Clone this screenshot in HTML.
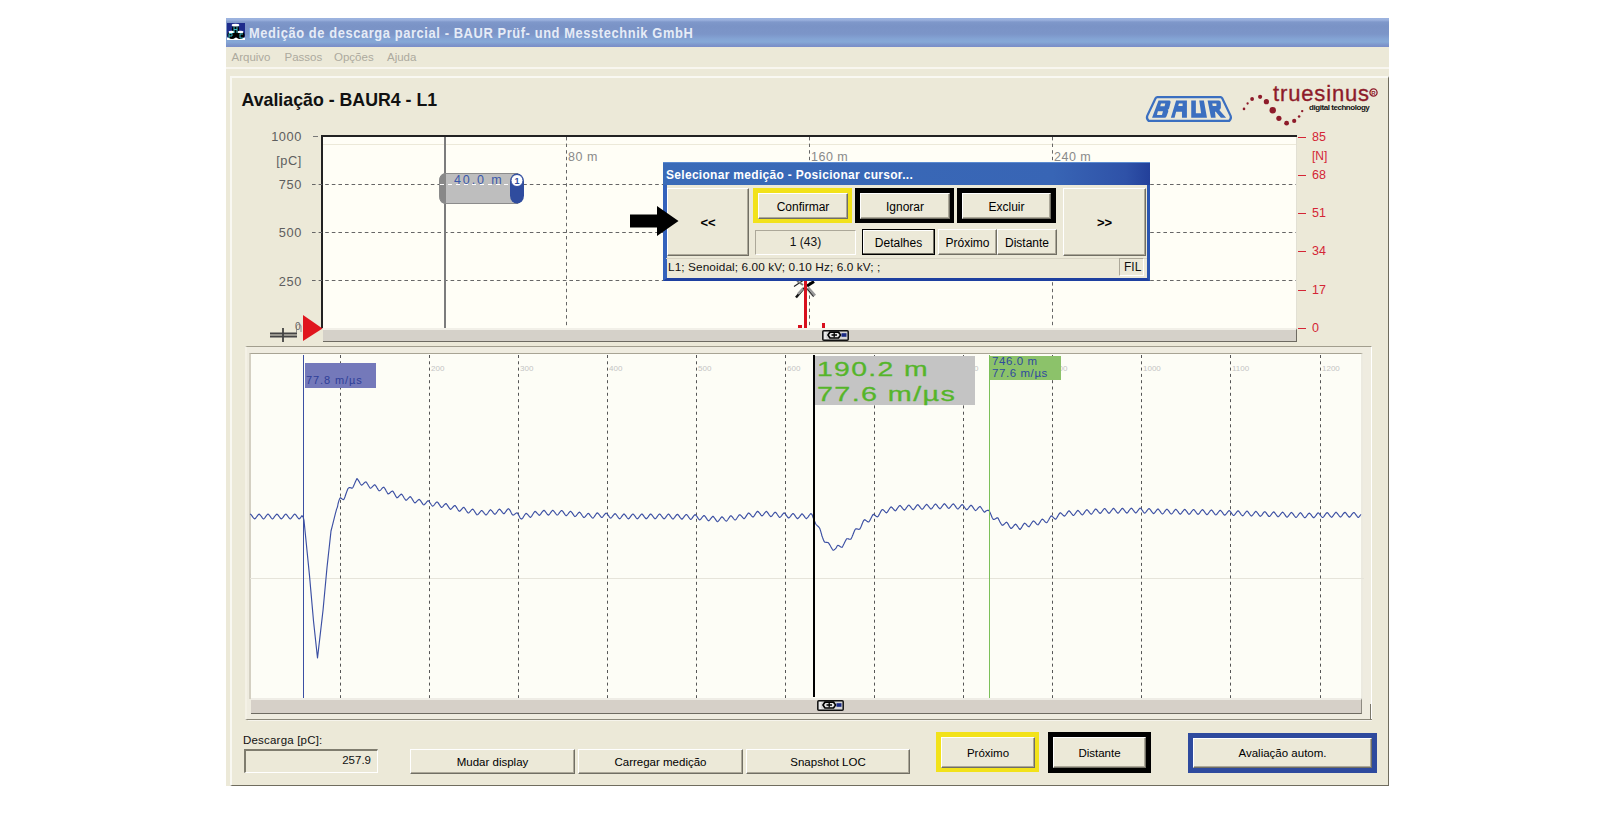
<!DOCTYPE html>
<html><head><meta charset="utf-8"><title>BAUR</title><style>
html,body{margin:0;padding:0;background:#fff;}
body{width:1620px;height:818px;position:relative;overflow:hidden;font-family:"Liberation Sans",sans-serif;}
.a{position:absolute;}
.t{position:absolute;white-space:nowrap;line-height:1;}
.btn{position:absolute;box-sizing:border-box;background:#ECE9D8;border-top:1px solid #FFFFFF;border-left:1px solid #FFFFFF;border-right:1px solid #716F64;border-bottom:1px solid #716F64;box-shadow:inset -1px -1px 0 #ACA899;font-size:12px;color:#000;text-align:center;}
.btn span{position:absolute;left:0;right:0;white-space:nowrap;}
.hd{position:absolute;height:0;border-top:1px dashed #555;}
</style></head><body>

<div class="a" style="left:226px;top:18px;width:1163px;height:768px;background:#ECE9D8;"></div>
<div class="a" style="left:226px;top:18px;width:1163px;height:29px;background:linear-gradient(#9CB3DF 0px,#9AB1DD 2px,#7F98CA 4px,#7A93C6 8px,#7C95C8 16px,#84A4D5 21px,#86A8D6 24px,#7D95CB 27px,#7A8CC8 29px);"></div>
<svg class="a" style="left:227px;top:23px" width="18" height="17" viewBox="0 0 18 17">
<rect x="0" y="0" width="18" height="17" fill="#1E2C8C"/>
<rect x="0" y="14.5" width="18" height="2.5" fill="#fff"/>
<ellipse cx="8.5" cy="6.5" rx="3.6" ry="4.5" fill="#000"/>
<ellipse cx="8.5" cy="2.2" rx="3.8" ry="1.4" fill="#fff"/>
<ellipse cx="5" cy="12" rx="4.6" ry="4" fill="#000"/>
<ellipse cx="13" cy="12" rx="4.6" ry="4" fill="#000"/>
<ellipse cx="4.5" cy="9" rx="3" ry="1.3" fill="#fff"/>
<ellipse cx="13.5" cy="9" rx="3" ry="1.3" fill="#fff"/>
<path d="M7,3.5 V10 M7,6.5 H10 M10,3.5 V10" stroke="#40C8D8" stroke-width="0.9" fill="none"/>
<path d="M2,15 V10.5 H5 V13 H2" stroke="#40C8D8" stroke-width="0.9" fill="none"/>
<path d="M16,11 H13 V15 H16" stroke="#40C8D8" stroke-width="0.9" fill="none"/>
</svg>
<div class="t" id="ttl" style="left:249px;top:25px;font-size:15px;font-weight:bold;color:#E6ECF7;letter-spacing:0.7px;transform-origin:0 0;transform:scaleX(0.858);">Medição de descarga parcial - BAUR Prüf- und Messtechnik GmbH</div>
<div class="t" style="left:231.5px;top:52px;font-size:11.5px;color:#ACAA9E;">Arquivo</div>
<div class="t" style="left:284.5px;top:52px;font-size:11.5px;color:#ACAA9E;">Passos</div>
<div class="t" style="left:334px;top:52px;font-size:11.5px;color:#ACAA9E;">Opções</div>
<div class="t" style="left:387px;top:52px;font-size:11.5px;color:#ACAA9E;">Ajuda</div>
<div class="a" style="left:226px;top:67px;width:1163px;height:2px;background:#F8F6EF;"></div>
<div class="a" style="left:230px;top:76px;width:1159px;height:710px;border-top:2px solid #F9F8F2;border-left:2px solid #F9F8F2;border-right:1px solid #6F6C5E;border-bottom:1px solid #6F6C5E;box-sizing:border-box;"></div>
<div class="t" style="left:241.5px;top:92.3px;font-size:17.75px;font-weight:bold;color:#111;">Avaliação - BAUR4 - L1</div>
<svg class="a" style="left:1140px;top:85px" width="100" height="45" viewBox="0 0 1620 729">
<path d="M282,197 L1305,197 Q1322,197 1332,215 L1468,500 Q1485,545 1445,582 L140,582 Q100,545 117,500 L252,215 Q262,197 282,197 Z" fill="none" stroke="#3B6FC0" stroke-width="36"/>
<path fill-rule="evenodd" fill="#3B6FC0" d="M300,250 L475,250 Q500,252 495,285 L472,375 Q468,392 448,400 Q462,410 458,430 L430,505 Q420,530 395,530 L195,530 Z M340,300 L410,300 L398,345 L328,345 Z M290,425 L372,425 L356,485 L274,485 Z"/>
<path fill-rule="evenodd" fill="#3B6FC0" d="M585,250 L760,250 L760,530 L680,530 L680,432 L585,432 L560,530 L500,530 Z M630,300 L690,300 L690,340 L620,340 Z"/>
<path fill="#3B6FC0" d="M830,250 L905,250 L905,458 L990,458 L960,250 L1035,250 L1085,530 L830,530 Z"/>
<path fill-rule="evenodd" fill="#3B6FC0" d="M1095,250 L1280,250 Q1310,255 1310,290 L1310,370 Q1305,395 1285,405 L1395,530 L1310,530 L1228,432 L1215,432 L1225,530 L1150,530 Z M1170,300 L1238,300 L1238,342 L1178,342 Z"/>
</svg>
<svg class="a" style="left:0px;top:0px;overflow:visible" width="1" height="1"><circle cx="1244.0" cy="108.9" r="1.3" fill="#8E1B2A"/><circle cx="1247.6" cy="103.5" r="1.15" fill="#8E1B2A"/><circle cx="1252.1" cy="99.0" r="1.9" fill="#8E1B2A"/><circle cx="1260.1" cy="96.8" r="2.1" fill="#8E1B2A"/><circle cx="1266.4" cy="101.7" r="2.6" fill="#8E1B2A"/><circle cx="1272.7" cy="110.2" r="3.2" fill="#8E1B2A"/><circle cx="1278.9" cy="118.3" r="2.6" fill="#8E1B2A"/><circle cx="1286.6" cy="123.2" r="2.4" fill="#8E1B2A"/><circle cx="1294.2" cy="120.9" r="2.1" fill="#8E1B2A"/><circle cx="1299.1" cy="116.5" r="1.3" fill="#8E1B2A"/><circle cx="1302.2" cy="111.1" r="1.2" fill="#8E1B2A"/></svg>
<div class="t" id="ts" style="left:1273px;top:82.5px;font-size:22px;color:#8E1B2A;letter-spacing:0.85px;-webkit-text-stroke:0.35px #8E1B2A;">truesinus</div>
<svg class="a" style="left:1369px;top:87.5px" width="9" height="9" viewBox="0 0 9 9"><circle cx="4.5" cy="4.5" r="3.6" fill="none" stroke="#8E1B2A" stroke-width="1.3"/><text x="4.5" y="7" text-anchor="middle" font-size="6" font-weight="bold" fill="#8E1B2A" font-family="Liberation Sans">R</text></svg>
<div class="t" style="left:1309px;top:104px;font-size:8px;color:#111;font-weight:bold;letter-spacing:-0.45px;">digital technology</div>
<div class="a" style="left:321px;top:135px;width:976px;height:193px;background:#FFFEF6;border-top:2px solid #222;border-left:2px solid #222;box-sizing:border-box;"></div>
<div class="a" style="left:323px;top:144px;width:973px;height:1px;background:#ECE9D9;"></div>
<div class="a" style="left:1296px;top:137px;width:1px;height:191px;background:#E2E0D4;"></div>
<div class="a" style="left:313px;top:136px;width:5px;height:1px;background:#777;"></div>
<svg class="a" style="left:0;top:0" width="1620" height="818"><line x1="312" y1="184.5" x2="1296" y2="184.5" stroke="#666" stroke-width="1" stroke-dasharray="3.6 3"/></svg>
<svg class="a" style="left:0;top:0" width="1620" height="818"><line x1="312" y1="232.5" x2="1296" y2="232.5" stroke="#666" stroke-width="1" stroke-dasharray="3.6 3"/></svg>
<svg class="a" style="left:0;top:0" width="1620" height="818"><line x1="312" y1="280.5" x2="1296" y2="280.5" stroke="#666" stroke-width="1" stroke-dasharray="3.6 3"/></svg>
<svg class="a" style="left:0;top:0" width="1620" height="818"><line x1="566.5" y1="137" x2="566.5" y2="328" stroke="#666" stroke-width="1" stroke-dasharray="3.4 3.2"/></svg>
<svg class="a" style="left:0;top:0" width="1620" height="818"><line x1="809.5" y1="137" x2="809.5" y2="328" stroke="#666" stroke-width="1" stroke-dasharray="3.4 3.2"/></svg>
<svg class="a" style="left:0;top:0" width="1620" height="818"><line x1="1052.5" y1="137" x2="1052.5" y2="328" stroke="#666" stroke-width="1" stroke-dasharray="3.4 3.2"/></svg>
<div class="t" style="left:568px;top:151px;font-size:12.5px;color:#8A8A8A;letter-spacing:0.5px;">80 m</div>
<div class="t" style="left:811px;top:151px;font-size:12.5px;color:#8A8A8A;letter-spacing:0.5px;">160 m</div>
<div class="t" style="left:1054px;top:151px;font-size:12.5px;color:#8A8A8A;letter-spacing:0.5px;">240 m</div>
<div class="t" style="left:240px;width:62px;text-align:right;top:131px;font-size:12.8px;color:#5E5E5E;letter-spacing:0.6px;">1000</div>
<div class="t" style="left:240px;width:62px;text-align:right;top:155px;font-size:12.8px;color:#5E5E5E;letter-spacing:0.6px;">[pC]</div>
<div class="t" style="left:240px;width:62px;text-align:right;top:179px;font-size:12.8px;color:#5E5E5E;letter-spacing:0.6px;">750</div>
<div class="t" style="left:240px;width:62px;text-align:right;top:227px;font-size:12.8px;color:#5E5E5E;letter-spacing:0.6px;">500</div>
<div class="t" style="left:240px;width:62px;text-align:right;top:276px;font-size:12.8px;color:#5E5E5E;letter-spacing:0.6px;">250</div>
<div class="t" style="left:295px;top:322px;font-size:10px;color:#666;">0</div>
<div class="a" style="left:1298px;top:136.5px;width:8px;height:1.2px;background:#D42535;"></div>
<div class="t" style="left:1312px;top:131px;font-size:12.5px;color:#D42535;">85</div>
<div class="a" style="left:1298px;top:174.5px;width:8px;height:1.2px;background:#D42535;"></div>
<div class="t" style="left:1312px;top:169px;font-size:12.5px;color:#D42535;">68</div>
<div class="a" style="left:1298px;top:212.5px;width:8px;height:1.2px;background:#D42535;"></div>
<div class="t" style="left:1312px;top:207px;font-size:12.5px;color:#D42535;">51</div>
<div class="a" style="left:1298px;top:250.5px;width:8px;height:1.2px;background:#D42535;"></div>
<div class="t" style="left:1312px;top:245px;font-size:12.5px;color:#D42535;">34</div>
<div class="a" style="left:1298px;top:289.5px;width:8px;height:1.2px;background:#D42535;"></div>
<div class="t" style="left:1312px;top:284px;font-size:12.5px;color:#D42535;">17</div>
<div class="a" style="left:1298px;top:327.5px;width:8px;height:1.2px;background:#D42535;"></div>
<div class="t" style="left:1312px;top:322px;font-size:12.5px;color:#D42535;">0</div>
<div class="t" style="left:1312px;top:150px;font-size:12px;color:#D42535;">[N]</div>
<div class="a" style="left:444px;top:137px;width:2px;height:191px;background:#7C7C7C;"></div>
<svg class="a" style="left:438px;top:172px" width="90" height="34" viewBox="0 0 90 34">
<path d="M8,1.5 L80,1.5 L80,31.5 L8,31.5 Q1.5,31.5 1.5,24 L1.5,9 Q1.5,1.5 8,1.5 Z" fill="#BEBEBE" stroke="#8C8C8C" stroke-width="1"/>
<path d="M8,1.5 L8,31.5 Q1.5,31.5 1.5,24 L1.5,9 Q1.5,1.5 8,1.5 Z" fill="#888"/>
<rect x="72" y="1.5" width="14" height="30" rx="7" ry="8" fill="#2F4C9E"/>
<circle cx="79" cy="8.5" r="6" fill="#fff" stroke="#2F4C9E" stroke-width="1"/>
<text x="79" y="12" text-anchor="middle" font-size="9" font-family="Liberation Sans" font-weight="bold" fill="#2F4C9E">1</text>
</svg>
<div class="a" style="left:440px;top:184px;width:70px;height:1px;background:repeating-linear-gradient(90deg,#fff 0 4px,transparent 4px 8px);"></div>
<div class="t" style="left:454px;top:174px;font-size:12.5px;color:#3A58AA;letter-spacing:1.9px;">40.0 m</div>
<div class="a" style="left:323px;top:328px;width:974px;height:14px;background:#D5D1C9;border-top:2px solid #F2F0E8;border-bottom:1.5px solid #6E6B62;border-right:1px solid #6E6B62;box-sizing:border-box;"></div>
<svg class="a" style="left:822px;top:330px" width="27" height="11" viewBox="0 0 27 11">
<rect x="0.8" y="0.8" width="25.4" height="9.4" rx="1" fill="#D6D6D6" stroke="#111" stroke-width="1.5"/>
<path d="M4.5,2.5 H3 V8.5 H4.5" stroke="#F4F4F4" stroke-width="1.2" fill="none"/>
<path d="M7.5,1.2 L17,1.2 L19.5,5 L17,8.8 L7.5,8.8 L5,5 Z" fill="#000"/>
<path d="M8.5,3 L16,3 L17.6,5 L16,7.2 L8.5,7.2 L7,5 Z" fill="#E6E6E6"/>
<path d="M12.2,2.6 V7.6 M9.5,5 H15" stroke="#000" stroke-width="1.3"/>
<rect x="19.5" y="3.2" width="5" height="3.6" fill="#1A2A84"/>
</svg>
<svg class="a" style="left:300px;top:312px" width="26" height="32" viewBox="0 0 26 32"><path d="M3,3 L22.5,16.5 L3,29 Z" fill="#E0161E"/></svg>
<svg class="a" style="left:266px;top:320px" width="40" height="26" viewBox="0 0 40 26">
<path d="M4,13.5 H31 M4,16.5 H31 M17,8 V22" stroke="#444" stroke-width="1.8" fill="none"/>
<path d="M30.5,13 V5.5 Q33,2.5 35,5.5 V12" stroke="#777" stroke-width="0.8" fill="none"/>
</svg>
<div class="a" style="left:804px;top:281px;width:3px;height:47px;background:#D8101E;"></div>
<div class="a" style="left:798px;top:325px;width:4px;height:3px;background:#D8101E;"></div>
<div class="a" style="left:822px;top:323px;width:3px;height:5px;background:#D8101E;"></div>
<svg class="a" style="left:788px;top:276px" width="36" height="28" viewBox="0 0 36 28">
<path d="M6,10.5 L15,4.5" stroke="#222" stroke-width="1.2"/>
<path d="M9,5 L15,9" stroke="#777" stroke-width="2"/>
<path d="M8,21.5 L16,12" stroke="#111" stroke-width="2.4"/>
<path d="M10,18 L15,12.5" stroke="#999" stroke-width="2.5"/>
<path d="M19,10 L26,5.5" stroke="#000" stroke-width="3"/>
<path d="M19.5,12 L26.5,20" stroke="#999" stroke-width="4"/>
<path d="M19,12.5 L25.5,20.5" stroke="#222" stroke-width="1"/>
</svg>
<div class="a" style="left:804px;top:281px;width:3px;height:20px;background:#D8101E;"></div>
<div class="a" style="left:663px;top:162px;width:487px;height:119px;background:#ECE9D8;box-sizing:border-box;border-left:4px solid #3462BC;border-right:3px solid #2A55B0;border-bottom:3px solid #1E40A0;"></div>
<div class="a" style="left:663px;top:162px;width:487px;height:23px;background:linear-gradient(90deg,#3A6BB8 0%,#3865B5 80%,#2F52A8 95%,#23409A 100%);border-top:1px solid #5A8AD0;box-sizing:border-box;"></div>
<div class="t" style="left:666px;top:169px;font-size:12px;font-weight:bold;color:#fff;letter-spacing:0.3px;">Selecionar medição - Posicionar cursor...</div>
<div class="btn" style="left:667px;top:188px;width:82px;height:68px;"><span style="top:26px;font-size:13px;font-weight:bold;">&lt;&lt;</span></div>
<div class="btn" style="left:1063px;top:188px;width:83px;height:68px;"><span style="top:26px;font-size:13px;font-weight:bold;">&gt;&gt;</span></div>
<div class="a" style="left:753px;top:188px;width:99px;height:35px;background:#F2E21A;"></div>
<div class="btn" style="left:758px;top:193px;width:90px;height:26px;"><span style="top:6px;font-size:12px;">Confirmar</span></div>
<div class="a" style="left:855px;top:188px;width:99px;height:35px;background:#000;"></div>
<div class="btn" style="left:860px;top:193px;width:90px;height:26px;"><span style="top:6px;font-size:12px;">Ignorar</span></div>
<div class="a" style="left:957px;top:188px;width:99px;height:35px;background:#000;"></div>
<div class="btn" style="left:962px;top:193px;width:89px;height:26px;"><span style="top:6px;font-size:12px;">Excluir</span></div>
<div class="a" style="left:755px;top:230px;width:101px;height:25px;box-sizing:border-box;border-top:1px solid #ACA899;border-left:1px solid #ACA899;border-right:1px solid #fff;border-bottom:1px solid #fff;"></div>
<div class="t" style="left:755px;width:101px;text-align:center;top:236px;font-size:12px;color:#111;">1 (43)</div>
<div class="btn" style="left:862px;top:229px;width:73px;height:26px;border:1px solid #000;box-shadow:inset -1px -1px 0 #716F64, inset 1px 1px 0 #fff;"><span style="top:6px;font-size:12px;">Detalhes</span></div>
<div class="btn" style="left:938px;top:229px;width:59px;height:26px;"><span style="top:6px;font-size:12px;">Próximo</span></div>
<div class="btn" style="left:997px;top:229px;width:60px;height:26px;"><span style="top:6px;font-size:12px;">Distante</span></div>
<div class="a" style="left:666px;top:258px;width:481px;height:1px;background:#D8D4C4;"></div>
<div class="t" style="left:668px;top:262px;font-size:11.8px;color:#111;letter-spacing:0.1px;">L1; Senoidal; 6.00 kV; 0.10 Hz; 6.0 kV; ;</div>
<div class="a" style="left:1119px;top:258px;width:25px;height:18px;box-sizing:border-box;border-top:1px solid #ACA899;border-left:1px solid #ACA899;border-right:1px solid #fff;border-bottom:1px solid #fff;"></div>
<div class="t" style="left:1124px;top:261px;font-size:12px;color:#111;">FIL</div>
<svg class="a" style="left:628px;top:204px" width="52" height="34" viewBox="0 0 52 34"><path d="M2,10.5 H29 V2 L50.5,17 L29,32 V23.5 H2 Z" fill="#000"/></svg>
<div class="a" style="left:247px;top:346px;width:125px;height:374px;"></div>
<div class="a" style="left:245px;top:346px;width:1127px;height:374px;box-sizing:border-box;border-top:1px solid #A29E8E;border-left:2px solid #F4F1E6;border-right:1px solid #fff;border-bottom:1px solid #8A877A;background:#EFECE0;"></div>
<div class="a" style="left:249px;top:353px;width:1114px;height:346px;background:#FDFDF6;border-top:1px solid #A8A494;border-left:2px solid #D4D0C2;border-right:2px solid #ECEAE0;box-sizing:border-box;"></div>
<div class="a" style="left:250px;top:578px;width:1114px;height:1px;background:#E6E4DA;"></div>
<svg class="a" style="left:0;top:0" width="1620" height="818"><line x1="340.5" y1="355" x2="340.5" y2="698" stroke="#555" stroke-width="1" stroke-dasharray="3 3.3"/></svg>
<svg class="a" style="left:0;top:0" width="1620" height="818"><line x1="429.5" y1="355" x2="429.5" y2="698" stroke="#555" stroke-width="1" stroke-dasharray="3 3.3"/></svg>
<div class="t" style="left:431px;top:365px;font-size:8px;color:#C4C4C4;">200</div>
<svg class="a" style="left:0;top:0" width="1620" height="818"><line x1="518.5" y1="355" x2="518.5" y2="698" stroke="#555" stroke-width="1" stroke-dasharray="3 3.3"/></svg>
<div class="t" style="left:520px;top:365px;font-size:8px;color:#C4C4C4;">300</div>
<svg class="a" style="left:0;top:0" width="1620" height="818"><line x1="607.5" y1="355" x2="607.5" y2="698" stroke="#555" stroke-width="1" stroke-dasharray="3 3.3"/></svg>
<div class="t" style="left:609px;top:365px;font-size:8px;color:#C4C4C4;">400</div>
<svg class="a" style="left:0;top:0" width="1620" height="818"><line x1="696.5" y1="355" x2="696.5" y2="698" stroke="#555" stroke-width="1" stroke-dasharray="3 3.3"/></svg>
<div class="t" style="left:698px;top:365px;font-size:8px;color:#C4C4C4;">500</div>
<svg class="a" style="left:0;top:0" width="1620" height="818"><line x1="785.5" y1="355" x2="785.5" y2="698" stroke="#555" stroke-width="1" stroke-dasharray="3 3.3"/></svg>
<div class="t" style="left:787px;top:365px;font-size:8px;color:#C4C4C4;">600</div>
<svg class="a" style="left:0;top:0" width="1620" height="818"><line x1="874.5" y1="355" x2="874.5" y2="698" stroke="#555" stroke-width="1" stroke-dasharray="3 3.3"/></svg>
<div class="t" style="left:876px;top:365px;font-size:8px;color:#C4C4C4;">700</div>
<svg class="a" style="left:0;top:0" width="1620" height="818"><line x1="963.5" y1="355" x2="963.5" y2="698" stroke="#555" stroke-width="1" stroke-dasharray="3 3.3"/></svg>
<div class="t" style="left:965px;top:365px;font-size:8px;color:#C4C4C4;">800</div>
<svg class="a" style="left:0;top:0" width="1620" height="818"><line x1="1052.5" y1="355" x2="1052.5" y2="698" stroke="#555" stroke-width="1" stroke-dasharray="3 3.3"/></svg>
<div class="t" style="left:1054px;top:365px;font-size:8px;color:#C4C4C4;">900</div>
<svg class="a" style="left:0;top:0" width="1620" height="818"><line x1="1141.5" y1="355" x2="1141.5" y2="698" stroke="#555" stroke-width="1" stroke-dasharray="3 3.3"/></svg>
<div class="t" style="left:1143px;top:365px;font-size:8px;color:#C4C4C4;">1000</div>
<svg class="a" style="left:0;top:0" width="1620" height="818"><line x1="1230.5" y1="355" x2="1230.5" y2="698" stroke="#555" stroke-width="1" stroke-dasharray="3 3.3"/></svg>
<div class="t" style="left:1232px;top:365px;font-size:8px;color:#C4C4C4;">1100</div>
<svg class="a" style="left:0;top:0" width="1620" height="818"><line x1="1320.5" y1="355" x2="1320.5" y2="698" stroke="#555" stroke-width="1" stroke-dasharray="3 3.3"/></svg>
<div class="t" style="left:1322px;top:365px;font-size:8px;color:#C4C4C4;">1200</div>
<div class="a" style="left:251px;top:698px;width:1111px;height:16px;background:#D6D0C8;border-top:2px solid #EFEDE6;border-bottom:1px solid #6E6B62;border-right:1px solid #8E8B82;box-sizing:border-box;"></div>
<div class="a" style="left:248px;top:719px;width:1124px;height:1px;background:#8A877A;"></div>
<div class="a" style="left:1370px;top:704px;width:1px;height:16px;background:#7A776A;"></div>
<svg class="a" style="left:817px;top:700px" width="27" height="11" viewBox="0 0 27 11">
<rect x="0.8" y="0.8" width="25.4" height="9.4" rx="1" fill="#D6D6D6" stroke="#111" stroke-width="1.5"/>
<path d="M4.5,2.5 H3 V8.5 H4.5" stroke="#F4F4F4" stroke-width="1.2" fill="none"/>
<path d="M7.5,1.2 L17,1.2 L19.5,5 L17,8.8 L7.5,8.8 L5,5 Z" fill="#000"/>
<path d="M8.5,3 L16,3 L17.6,5 L16,7.2 L8.5,7.2 L7,5 Z" fill="#E6E6E6"/>
<path d="M12.2,2.6 V7.6 M9.5,5 H15" stroke="#000" stroke-width="1.3"/>
<rect x="19.5" y="3.2" width="5" height="3.6" fill="#1A2A84"/>
</svg>
<svg class="a" style="left:0;top:0" width="1620" height="818" viewBox="0 0 1620 818"><path d="M250.0,514.1 L250.5,514.2 L251.0,514.7 L251.5,515.2 L252.0,515.9 L252.5,516.6 L253.0,517.3 L253.5,517.9 L254.0,518.5 L254.5,518.9 L255.0,518.7 L255.5,518.3 L256.0,517.7 L256.5,517.0 L257.0,516.3 L257.5,515.6 L258.0,515.0 L258.5,514.5 L259.0,514.1 L259.5,514.3 L260.0,514.8 L260.5,515.4 L261.0,516.0 L261.5,516.7 L262.0,517.4 L262.5,518.1 L263.0,518.6 L263.5,519.0 L264.0,518.7 L264.5,518.2 L265.0,517.6 L265.5,516.9 L266.0,516.2 L266.5,515.5 L267.0,514.9 L267.5,514.4 L268.0,514.0 L268.5,514.4 L269.0,514.9 L269.5,515.5 L270.0,516.2 L270.5,516.9 L271.0,517.6 L271.5,518.2 L272.0,518.7 L272.5,519.0 L273.0,518.6 L273.5,518.1 L274.0,517.4 L274.5,516.7 L275.0,516.0 L275.5,515.4 L276.0,514.8 L276.5,514.3 L277.0,514.1 L277.5,514.5 L278.0,515.0 L278.5,515.6 L279.0,516.3 L279.5,517.0 L280.0,517.7 L280.5,518.3 L281.0,518.7 L281.5,518.9 L282.0,518.5 L282.5,517.9 L283.0,517.3 L283.5,516.6 L284.0,515.9 L284.5,515.2 L285.0,514.7 L285.5,514.2 L286.0,514.1 L286.5,514.6 L287.0,515.1 L287.5,515.8 L288.0,516.5 L288.5,517.2 L289.0,517.8 L289.5,518.4 L290.0,518.8 L290.5,518.8 L291.0,518.4 L291.5,517.8 L292.0,517.2 L292.5,516.5 L293.0,515.8 L293.5,515.1 L294.0,514.6 L294.5,514.1 L295.0,514.2 L295.5,514.7 L296.0,515.2 L296.5,515.9 L297.0,516.6 L297.5,517.3 L298.0,517.9 L298.5,518.5 L299.0,518.9 L299.5,518.7 L300.0,518.3 L300.5,517.7 L301.0,517.0 L301.5,516.3 L302.0,515.6 L302.5,516.5 L303.0,516.5 L303.5,518.5 L304.0,520.5 L304.5,525.5 L305.0,530.5 L305.5,535.5 L306.0,540.5 L306.5,545.5 L307.0,550.6 L307.5,555.6 L308.0,560.6 L308.5,565.6 L309.0,570.6 L309.5,575.6 L310.0,581.3 L310.5,587.0 L311.0,592.6 L311.5,598.3 L312.0,604.0 L312.5,609.6 L313.0,615.3 L313.5,621.0 L314.0,625.6 L314.5,630.2 L315.0,634.9 L315.5,639.5 L316.0,644.1 L316.5,648.8 L317.0,653.4 L317.5,658.0 L318.0,653.7 L318.5,649.4 L319.0,645.0 L319.5,640.7 L320.0,636.4 L320.5,632.1 L321.0,627.8 L321.5,623.5 L322.0,619.1 L322.5,614.8 L323.0,610.5 L323.5,605.1 L324.0,599.8 L324.5,594.4 L325.0,589.0 L325.5,583.6 L326.0,578.2 L326.5,572.9 L327.0,567.5 L327.5,562.9 L328.0,558.4 L328.5,553.8 L329.0,549.2 L329.5,544.7 L330.0,540.1 L330.5,535.6 L331.0,531.0 L331.5,529.0 L332.0,527.1 L332.5,525.1 L333.0,523.1 L333.5,521.1 L334.0,519.2 L334.5,517.2 L335.0,515.2 L335.5,513.2 L336.0,511.3 L336.5,509.4 L337.0,508.1 L337.5,506.8 L338.0,504.0 L338.5,502.1 L339.0,500.4 L339.5,499.1 L340.0,498.2 L340.5,497.7 L341.0,498.1 L341.5,498.5 L342.0,498.9 L342.5,499.3 L343.0,499.5 L343.5,499.7 L344.0,499.2 L344.5,498.0 L345.0,496.7 L345.5,495.3 L346.0,493.8 L346.5,492.4 L347.0,491.0 L347.5,489.7 L348.0,488.6 L348.5,488.0 L349.0,487.8 L349.5,487.6 L350.0,487.5 L350.5,487.7 L351.0,487.9 L351.5,488.1 L352.0,488.1 L352.5,488.0 L353.0,487.2 L353.5,486.2 L354.0,485.1 L354.5,483.9 L355.0,482.7 L355.5,481.5 L356.0,480.4 L356.5,479.4 L357.0,478.5 L357.5,479.1 L358.0,479.8 L358.5,480.6 L359.0,481.4 L359.5,482.3 L360.0,483.2 L360.5,484.0 L361.0,484.7 L361.5,485.2 L362.0,485.0 L362.5,484.6 L363.0,484.2 L363.5,483.7 L364.0,483.2 L364.5,482.7 L365.0,482.3 L365.5,482.0 L366.0,481.9 L366.5,482.5 L367.0,483.2 L367.5,484.0 L368.0,484.8 L368.5,485.7 L369.0,486.5 L369.5,487.3 L370.0,487.9 L370.5,488.2 L371.0,488.0 L371.5,487.6 L372.0,487.1 L372.5,486.6 L373.0,486.1 L373.5,485.6 L374.0,485.2 L374.5,484.8 L375.0,484.9 L375.5,485.5 L376.0,486.2 L376.5,486.9 L377.0,487.8 L377.5,488.6 L378.0,489.4 L378.5,490.1 L379.0,490.7 L379.5,490.8 L380.0,490.5 L380.5,490.1 L381.0,489.6 L381.5,489.0 L382.0,488.4 L382.5,487.9 L383.0,487.5 L383.5,487.2 L384.0,487.4 L384.5,488.0 L385.0,488.7 L385.5,489.6 L386.0,490.6 L386.5,491.5 L387.0,492.3 L387.5,493.1 L388.0,493.8 L388.5,493.8 L389.0,493.6 L389.5,493.2 L390.0,492.8 L390.5,492.3 L391.0,491.9 L391.5,491.5 L392.0,491.2 L392.5,491.0 L393.0,491.4 L393.5,492.1 L394.0,493.0 L394.5,493.9 L395.0,494.8 L395.5,495.7 L396.0,496.6 L396.5,497.2 L397.0,497.8 L397.5,497.6 L398.0,497.2 L398.5,496.8 L399.0,496.2 L399.5,495.7 L400.0,495.1 L400.5,494.7 L401.0,494.3 L401.5,494.1 L402.0,494.6 L402.5,495.2 L403.0,496.0 L403.5,496.8 L404.0,497.7 L404.5,498.5 L405.0,499.2 L405.5,499.9 L406.0,500.3 L406.5,500.1 L407.0,499.7 L407.5,499.2 L408.0,498.7 L408.5,498.1 L409.0,497.6 L409.5,497.1 L410.0,496.8 L410.5,496.7 L411.0,497.3 L411.5,498.0 L412.0,498.7 L412.5,499.6 L413.0,500.4 L413.5,501.2 L414.0,502.0 L414.5,502.6 L415.0,502.9 L415.5,502.6 L416.0,502.2 L416.5,501.7 L417.0,501.2 L417.5,500.7 L418.0,500.1 L418.5,499.7 L419.0,499.4 L419.5,499.5 L420.0,500.1 L420.5,500.7 L421.0,501.4 L421.5,502.2 L422.0,502.9 L422.5,503.7 L423.0,504.3 L423.5,504.8 L424.0,504.9 L424.5,504.5 L425.0,504.0 L425.5,503.4 L426.0,502.8 L426.5,502.1 L427.0,501.6 L427.5,501.1 L428.0,500.7 L428.5,500.9 L429.0,501.4 L429.5,502.0 L430.0,502.8 L430.5,503.5 L431.0,504.3 L431.5,505.0 L432.0,505.6 L432.5,506.1 L433.0,506.0 L433.5,505.6 L434.0,505.1 L434.5,504.5 L435.0,503.8 L435.5,503.2 L436.0,502.7 L436.5,502.2 L437.0,501.9 L437.5,502.2 L438.0,502.7 L438.5,503.4 L439.0,504.1 L439.5,504.9 L440.0,505.6 L440.5,506.4 L441.0,507.0 L441.5,507.5 L442.0,507.3 L442.5,506.9 L443.0,506.4 L443.5,505.8 L444.0,505.2 L444.5,504.7 L445.0,504.2 L445.5,503.8 L446.0,503.5 L446.5,504.0 L447.0,504.6 L447.5,505.3 L448.0,506.1 L448.5,506.9 L449.0,507.7 L449.5,508.4 L450.0,509.0 L450.5,509.4 L451.0,509.1 L451.5,508.7 L452.0,508.2 L452.5,507.6 L453.0,507.0 L453.5,506.5 L454.0,506.0 L454.5,505.6 L455.0,505.5 L455.5,506.0 L456.0,506.6 L456.5,507.4 L457.0,508.2 L457.5,509.0 L458.0,509.8 L458.5,510.5 L459.0,511.0 L459.5,511.3 L460.0,511.0 L460.5,510.5 L461.0,510.0 L461.5,509.4 L462.0,508.8 L462.5,508.2 L463.0,507.8 L463.5,507.4 L464.0,507.4 L464.5,508.0 L465.0,508.6 L465.5,509.4 L466.0,510.2 L466.5,511.0 L467.0,511.7 L467.5,512.4 L468.0,512.9 L468.5,513.0 L469.0,512.7 L469.5,512.2 L470.0,511.7 L470.5,511.1 L471.0,510.5 L471.5,509.9 L472.0,509.5 L472.5,509.1 L473.0,509.3 L473.5,509.9 L474.0,510.5 L474.5,511.3 L475.0,512.1 L475.5,512.9 L476.0,513.6 L476.5,514.3 L477.0,514.8 L477.5,514.7 L478.0,514.4 L478.5,513.9 L479.0,513.3 L479.5,512.7 L480.0,512.1 L480.5,511.5 L481.0,510.9 L481.5,510.5 L482.0,510.6 L482.5,511.1 L483.0,511.6 L483.5,512.3 L484.0,512.9 L484.5,513.6 L485.0,514.2 L485.5,514.7 L486.0,515.0 L486.5,514.7 L487.0,514.1 L487.5,513.5 L488.0,512.8 L488.5,512.0 L489.0,511.3 L489.5,510.7 L490.0,510.1 L490.5,509.7 L491.0,510.1 L491.5,510.5 L492.0,511.1 L492.5,511.7 L493.0,512.4 L493.5,513.1 L494.0,513.6 L494.5,514.1 L495.0,514.3 L495.5,513.9 L496.0,513.4 L496.5,512.7 L497.0,512.0 L497.5,511.2 L498.0,510.5 L498.5,509.9 L499.0,509.4 L499.5,509.1 L500.0,509.5 L500.5,510.0 L501.0,510.6 L501.5,511.2 L502.0,511.9 L502.5,512.6 L503.0,513.1 L503.5,513.6 L504.0,513.7 L504.5,513.3 L505.0,512.7 L505.5,512.0 L506.0,511.3 L506.5,510.6 L507.0,509.9 L507.5,509.3 L508.0,508.8 L508.5,508.7 L509.0,509.1 L509.5,509.6 L510.0,510.3 L510.5,511.3 L511.0,512.3 L511.5,513.2 L512.0,514.1 L512.5,514.8 L513.0,515.1 L513.5,515.0 L514.0,514.7 L514.5,514.4 L515.0,514.0 L515.5,513.6 L516.0,513.2 L516.5,513.0 L517.0,512.8 L517.5,513.2 L518.0,514.0 L518.5,514.8 L519.0,515.8 L519.5,516.8 L520.0,517.8 L520.5,518.3 L521.0,518.8 L521.5,519.1 L522.0,518.8 L522.5,518.3 L523.0,517.6 L523.5,516.8 L524.0,516.0 L524.5,515.2 L525.0,514.5 L525.5,513.9 L526.0,513.4 L526.5,513.5 L527.0,513.9 L527.5,514.4 L528.0,514.9 L528.5,515.5 L529.0,516.1 L529.5,516.7 L530.0,517.1 L530.5,517.4 L531.0,516.9 L531.5,516.3 L532.0,515.6 L532.5,514.8 L533.0,514.0 L533.5,513.2 L534.0,512.5 L534.5,511.8 L535.0,511.4 L535.5,511.6 L536.0,512.0 L536.5,512.5 L537.0,513.1 L537.5,513.7 L538.0,514.2 L538.5,514.7 L539.0,515.1 L539.5,515.3 L540.0,514.8 L540.5,514.3 L541.0,513.6 L541.5,512.9 L542.0,512.2 L542.5,511.6 L543.0,511.0 L543.5,510.5 L544.0,510.3 L544.5,510.7 L545.0,511.2 L545.5,511.8 L546.0,512.5 L546.5,513.2 L547.0,513.9 L547.5,514.5 L548.0,514.9 L548.5,515.1 L549.0,514.7 L549.5,514.1 L550.0,513.5 L550.5,512.8 L551.0,512.1 L551.5,511.4 L552.0,510.9 L552.5,510.4 L553.0,510.3 L553.5,510.8 L554.0,511.3 L554.5,512.0 L555.0,512.7 L555.5,513.4 L556.0,514.0 L556.5,514.6 L557.0,515.0 L557.5,515.0 L558.0,514.6 L558.5,514.0 L559.0,513.4 L559.5,512.7 L560.0,512.0 L560.5,511.4 L561.0,510.9 L561.5,510.5 L562.0,510.6 L562.5,511.1 L563.0,511.7 L563.5,512.4 L564.0,513.2 L564.5,513.9 L565.0,514.6 L565.5,515.2 L566.0,515.7 L566.5,515.6 L567.0,515.1 L567.5,514.6 L568.0,514.0 L568.5,513.3 L569.0,512.7 L569.5,512.1 L570.0,511.6 L570.5,511.3 L571.0,511.5 L571.5,512.1 L572.0,512.7 L572.5,513.4 L573.0,514.2 L573.5,514.9 L574.0,515.6 L574.5,516.2 L575.0,516.6 L575.5,516.3 L576.0,515.9 L576.5,515.3 L577.0,514.7 L577.5,514.0 L578.0,513.4 L578.5,512.8 L579.0,512.4 L579.5,512.1 L580.0,512.5 L580.5,513.1 L581.0,513.7 L581.5,514.5 L582.0,515.3 L582.5,516.0 L583.0,516.7 L583.5,517.3 L584.0,517.6 L584.5,517.3 L585.0,516.9 L585.5,516.3 L586.0,515.7 L586.5,515.1 L587.0,514.5 L587.5,513.9 L588.0,513.5 L588.5,513.4 L589.0,513.8 L589.5,514.4 L590.0,515.1 L590.5,515.8 L591.0,516.4 L591.5,517.0 L592.0,517.6 L592.5,518.0 L593.0,518.1 L593.5,517.6 L594.0,517.0 L594.5,516.3 L595.0,515.6 L595.5,514.9 L596.0,514.1 L596.5,513.5 L597.0,513.0 L597.5,512.9 L598.0,513.3 L598.5,513.8 L599.0,514.4 L599.5,515.0 L600.0,515.7 L600.5,516.4 L601.0,517.0 L601.5,517.4 L602.0,517.5 L602.5,517.1 L603.0,516.5 L603.5,515.9 L604.0,515.2 L604.5,514.6 L605.0,514.0 L605.5,513.5 L606.0,513.1 L606.5,513.2 L607.0,513.7 L607.5,514.3 L608.0,515.0 L608.5,515.7 L609.0,516.4 L609.5,517.1 L610.0,517.7 L610.5,518.1 L611.0,518.0 L611.5,517.6 L612.0,517.0 L612.5,516.4 L613.0,515.7 L613.5,515.1 L614.0,514.5 L614.5,514.0 L615.0,513.6 L615.5,513.9 L616.0,514.4 L616.5,515.0 L617.0,515.7 L617.5,516.5 L618.0,517.2 L618.5,517.9 L619.0,518.4 L619.5,518.8 L620.0,518.6 L620.5,518.1 L621.0,517.5 L621.5,516.8 L622.0,516.1 L622.5,515.4 L623.0,514.8 L623.5,514.3 L624.0,513.9 L624.5,514.3 L625.0,514.8 L625.5,515.4 L626.0,516.1 L626.5,516.8 L627.0,517.5 L627.5,518.1 L628.0,518.6 L628.5,518.9 L629.0,518.5 L629.5,518.0 L630.0,517.3 L630.5,516.6 L631.0,515.9 L631.5,515.3 L632.0,514.7 L632.5,514.2 L633.0,514.0 L633.5,514.4 L634.0,514.9 L634.5,515.5 L635.0,516.2 L635.5,516.9 L636.0,517.6 L636.5,518.2 L637.0,518.6 L637.5,518.8 L638.0,518.4 L638.5,517.8 L639.0,517.2 L639.5,516.5 L640.0,515.8 L640.5,515.1 L641.0,514.6 L641.5,514.1 L642.0,514.0 L642.5,514.5 L643.0,515.0 L643.5,515.7 L644.0,516.4 L644.5,517.1 L645.0,517.7 L645.5,518.3 L646.0,518.7 L646.5,518.7 L647.0,518.3 L647.5,517.7 L648.0,517.1 L648.5,516.4 L649.0,515.7 L649.5,515.0 L650.0,514.5 L650.5,514.0 L651.0,514.1 L651.5,514.6 L652.0,515.1 L652.5,515.8 L653.0,516.5 L653.5,517.2 L654.0,517.8 L654.5,518.4 L655.0,518.8 L655.5,518.6 L656.0,518.2 L656.5,517.6 L657.0,516.9 L657.5,516.2 L658.0,515.5 L658.5,514.9 L659.0,514.4 L659.5,514.0 L660.0,514.2 L660.5,514.7 L661.0,515.3 L661.5,516.0 L662.0,516.7 L662.5,517.4 L663.0,518.0 L663.5,518.5 L664.0,518.9 L664.5,518.6 L665.0,518.2 L665.5,517.6 L666.0,516.9 L666.5,516.2 L667.0,515.5 L667.5,514.9 L668.0,514.4 L668.5,514.0 L669.0,514.4 L669.5,514.9 L670.0,515.6 L670.5,516.3 L671.0,517.0 L671.5,517.7 L672.0,518.3 L672.5,518.8 L673.0,519.1 L673.5,518.7 L674.0,518.2 L674.5,517.6 L675.0,516.9 L675.5,516.2 L676.0,515.5 L676.5,515.0 L677.0,514.5 L677.5,514.3 L678.0,514.7 L678.5,515.2 L679.0,515.9 L679.5,516.6 L680.0,517.3 L680.5,517.9 L681.0,518.5 L681.5,519.0 L682.0,519.2 L682.5,518.8 L683.0,518.2 L683.5,517.6 L684.0,516.9 L684.5,516.2 L685.0,515.6 L685.5,515.0 L686.0,514.6 L686.5,514.5 L687.0,514.9 L687.5,515.5 L688.0,516.1 L688.5,516.9 L689.0,517.6 L689.5,518.2 L690.0,518.8 L690.5,519.3 L691.0,519.3 L691.5,518.8 L692.0,518.3 L692.5,517.6 L693.0,516.9 L693.5,516.2 L694.0,515.6 L694.5,515.1 L695.0,514.6 L695.5,514.8 L696.0,515.3 L696.5,515.9 L697.0,516.6 L697.5,517.4 L698.0,518.1 L698.5,518.8 L699.0,519.4 L699.5,519.9 L700.0,519.7 L700.5,519.3 L701.0,518.8 L701.5,518.2 L702.0,517.5 L702.5,516.9 L703.0,516.3 L703.5,515.8 L704.0,515.5 L704.5,515.7 L705.0,516.3 L705.5,516.9 L706.0,517.6 L706.5,518.4 L707.0,519.1 L707.5,519.8 L708.0,520.4 L708.5,520.8 L709.0,520.6 L709.5,520.1 L710.0,519.6 L710.5,518.9 L711.0,518.3 L711.5,517.7 L712.0,517.1 L712.5,516.6 L713.0,516.3 L713.5,516.7 L714.0,517.3 L714.5,518.0 L715.0,518.7 L715.5,519.4 L716.0,520.2 L716.5,520.8 L717.0,521.4 L717.5,521.7 L718.0,521.4 L718.5,520.9 L719.0,520.3 L719.5,519.7 L720.0,519.0 L720.5,518.3 L721.0,517.7 L721.5,517.1 L722.0,516.8 L722.5,517.2 L723.0,517.6 L723.5,518.2 L724.0,518.8 L724.5,519.5 L725.0,520.1 L725.5,520.6 L726.0,521.0 L726.5,521.1 L727.0,520.6 L727.5,520.0 L728.0,519.3 L728.5,518.5 L729.0,517.8 L729.5,517.1 L730.0,516.4 L730.5,515.9 L731.0,515.8 L731.5,516.1 L732.0,516.6 L732.5,517.2 L733.0,517.8 L733.5,518.5 L734.0,519.1 L734.5,519.6 L735.0,520.0 L735.5,519.9 L736.0,519.4 L736.5,518.8 L737.0,518.0 L737.5,517.3 L738.0,516.5 L738.5,515.8 L739.0,515.2 L739.5,514.7 L740.0,514.7 L740.5,515.1 L741.0,515.6 L741.5,516.1 L742.0,516.7 L742.5,517.3 L743.0,517.9 L743.5,518.3 L744.0,518.7 L744.5,518.4 L745.0,517.9 L745.5,517.2 L746.0,516.4 L746.5,515.6 L747.0,514.8 L747.5,514.1 L748.0,513.5 L748.5,513.0 L749.0,513.1 L749.5,513.5 L750.0,514.0 L750.5,514.6 L751.0,515.2 L751.5,515.8 L752.0,516.3 L752.5,516.8 L753.0,517.1 L753.5,516.7 L754.0,516.1 L754.5,515.4 L755.0,514.6 L755.5,513.8 L756.0,513.0 L756.5,512.3 L757.0,511.7 L757.5,511.3 L758.0,511.5 L758.5,512.0 L759.0,512.5 L759.5,513.1 L760.0,513.7 L760.5,514.4 L761.0,515.1 L761.5,515.6 L762.0,515.9 L762.5,515.6 L763.0,515.1 L763.5,514.5 L764.0,513.9 L764.5,513.2 L765.0,512.6 L765.5,512.0 L766.0,511.6 L766.5,511.4 L767.0,511.9 L767.5,512.4 L768.0,513.1 L768.5,513.8 L769.0,514.6 L769.5,515.3 L770.0,515.9 L770.5,516.4 L771.0,516.6 L771.5,516.3 L772.0,515.8 L772.5,515.2 L773.0,514.5 L773.5,513.9 L774.0,513.2 L774.5,512.7 L775.0,512.3 L775.5,512.3 L776.0,512.7 L776.5,513.3 L777.0,514.0 L777.5,514.8 L778.0,515.5 L778.5,516.2 L779.0,516.8 L779.5,517.3 L780.0,517.3 L780.5,516.9 L781.0,516.4 L781.5,515.8 L782.0,515.1 L782.5,514.4 L783.0,513.8 L783.5,513.3 L784.0,512.9 L784.5,513.0 L785.0,513.5 L785.5,514.1 L786.0,514.8 L786.5,515.6 L787.0,516.3 L787.5,517.0 L788.0,517.5 L788.5,518.0 L789.0,517.9 L789.5,517.4 L790.0,516.9 L790.5,516.3 L791.0,515.6 L791.5,514.9 L792.0,514.3 L792.5,513.8 L793.0,513.5 L793.5,513.7 L794.0,514.3 L794.5,514.9 L795.0,515.6 L795.5,516.3 L796.0,517.1 L796.5,517.7 L797.0,518.3 L797.5,518.7 L798.0,518.4 L798.5,518.0 L799.0,517.4 L799.5,516.8 L800.0,516.1 L800.5,515.4 L801.0,514.8 L801.5,514.2 L802.0,513.8 L802.5,514.2 L803.0,514.7 L803.5,515.3 L804.0,515.9 L804.5,516.6 L805.0,517.3 L805.5,517.9 L806.0,518.4 L806.5,518.7 L807.0,518.2 L807.5,517.7 L808.0,517.1 L808.5,516.4 L809.0,515.6 L809.5,515.0 L810.0,514.3 L810.5,513.8 L811.0,513.6 L811.5,514.0 L812.0,514.5 L812.5,515.8 L813.0,517.2 L813.5,518.5 L814.0,519.9 L814.5,521.1 L815.0,522.2 L815.5,523.5 L816.0,524.3 L816.5,524.9 L817.0,525.4 L817.5,525.8 L818.0,526.3 L818.5,526.7 L819.0,527.3 L819.5,528.0 L820.0,529.1 L820.5,530.6 L821.0,532.3 L821.5,534.1 L822.0,536.0 L822.5,537.4 L823.0,538.7 L823.5,540.0 L824.0,541.2 L824.5,541.9 L825.0,542.2 L825.5,542.3 L826.0,542.4 L826.5,542.4 L827.0,542.4 L827.5,542.5 L828.0,542.6 L828.5,542.9 L829.0,543.7 L829.5,544.4 L830.0,545.2 L830.5,546.0 L831.0,547.0 L831.5,547.9 L832.0,548.7 L832.5,549.5 L833.0,550.1 L833.5,550.2 L834.0,549.9 L834.5,549.5 L835.0,549.1 L835.5,548.6 L836.0,548.1 L836.5,547.2 L837.0,546.3 L837.5,545.5 L838.0,545.4 L838.5,545.5 L839.0,545.8 L839.5,546.1 L840.0,546.4 L840.5,546.8 L841.0,547.1 L841.5,547.2 L842.0,547.3 L842.5,546.6 L843.0,545.8 L843.5,544.8 L844.0,543.8 L844.5,542.7 L845.0,541.7 L845.5,540.7 L846.0,539.9 L846.5,538.9 L847.0,538.8 L847.5,538.7 L848.0,538.8 L848.5,538.9 L849.0,539.1 L849.5,539.2 L850.0,539.2 L850.5,539.2 L851.0,538.9 L851.5,538.0 L852.0,536.9 L852.5,535.7 L853.0,534.5 L853.5,533.2 L854.0,532.0 L854.5,530.8 L855.0,529.8 L855.5,529.0 L856.0,528.8 L856.5,528.8 L857.0,528.9 L857.5,529.0 L858.0,529.2 L858.5,529.3 L859.0,529.3 L859.5,529.2 L860.0,528.8 L860.5,527.8 L861.0,526.7 L861.5,525.5 L862.0,524.2 L862.5,523.0 L863.0,521.7 L863.5,520.9 L864.0,520.1 L864.5,519.7 L865.0,519.9 L865.5,520.1 L866.0,520.5 L866.5,520.9 L867.0,521.3 L867.5,521.6 L868.0,521.9 L868.5,522.0 L869.0,521.7 L869.5,521.0 L870.0,520.1 L870.5,519.2 L871.0,518.2 L871.5,517.2 L872.0,516.2 L872.5,515.4 L873.0,514.6 L873.5,514.4 L874.0,514.6 L874.5,514.9 L875.0,515.3 L875.5,515.7 L876.0,516.2 L876.5,516.5 L877.0,516.8 L877.5,516.9 L878.0,516.5 L878.5,515.8 L879.0,514.9 L879.5,514.0 L880.0,513.0 L880.5,512.0 L881.0,511.1 L881.5,510.3 L882.0,509.7 L882.5,509.6 L883.0,509.8 L883.5,510.1 L884.0,510.5 L884.5,511.1 L885.0,511.7 L885.5,512.2 L886.0,512.6 L886.5,512.9 L887.0,512.5 L887.5,511.9 L888.0,511.1 L888.5,510.3 L889.0,509.5 L889.5,508.7 L890.0,508.0 L890.5,507.4 L891.0,506.9 L891.5,507.1 L892.0,507.5 L892.5,508.0 L893.0,508.6 L893.5,509.2 L894.0,509.8 L894.5,510.2 L895.0,510.6 L895.5,510.8 L896.0,510.3 L896.5,509.7 L897.0,508.9 L897.5,508.2 L898.0,507.5 L898.5,506.8 L899.0,506.2 L899.5,505.7 L900.0,505.4 L900.5,505.8 L901.0,506.3 L901.5,506.9 L902.0,507.6 L902.5,508.3 L903.0,508.9 L903.5,509.5 L904.0,509.9 L904.5,510.1 L905.0,509.6 L905.5,509.1 L906.0,508.4 L906.5,507.7 L907.0,507.0 L907.5,506.3 L908.0,505.7 L908.5,505.2 L909.0,505.1 L909.5,505.5 L910.0,506.1 L910.5,506.7 L911.0,507.4 L911.5,508.0 L912.0,508.7 L912.5,509.2 L913.0,509.6 L913.5,509.6 L914.0,509.1 L914.5,508.6 L915.0,507.9 L915.5,507.2 L916.0,506.4 L916.5,505.8 L917.0,505.2 L917.5,504.7 L918.0,504.8 L918.5,505.2 L919.0,505.8 L919.5,506.4 L920.0,507.1 L920.5,507.8 L921.0,508.4 L921.5,508.9 L922.0,509.3 L922.5,509.2 L923.0,508.7 L923.5,508.1 L924.0,507.4 L924.5,506.7 L925.0,506.0 L925.5,505.3 L926.0,504.8 L926.5,504.3 L927.0,504.6 L927.5,505.0 L928.0,505.6 L928.5,506.3 L929.0,506.9 L929.5,507.6 L930.0,508.2 L930.5,508.7 L931.0,509.1 L931.5,508.8 L932.0,508.3 L932.5,507.6 L933.0,507.0 L933.5,506.2 L934.0,505.5 L934.5,504.9 L935.0,504.4 L935.5,504.0 L936.0,504.3 L936.5,504.8 L937.0,505.4 L937.5,506.1 L938.0,506.8 L938.5,507.4 L939.0,508.0 L939.5,508.5 L940.0,508.8 L940.5,508.4 L941.0,507.9 L941.5,507.2 L942.0,506.5 L942.5,505.8 L943.0,505.1 L943.5,504.5 L944.0,504.0 L944.5,503.7 L945.0,504.1 L945.5,504.7 L946.0,505.3 L946.5,505.9 L947.0,506.6 L947.5,507.3 L948.0,507.8 L948.5,508.3 L949.0,508.4 L949.5,508.0 L950.0,507.4 L950.5,506.8 L951.0,506.2 L951.5,505.5 L952.0,504.9 L952.5,504.4 L953.0,504.0 L953.5,503.9 L954.0,504.4 L954.5,505.0 L955.0,505.7 L955.5,506.4 L956.0,507.1 L956.5,507.8 L957.0,508.4 L957.5,508.9 L958.0,509.0 L958.5,508.6 L959.0,508.0 L959.5,507.4 L960.0,506.8 L960.5,506.1 L961.0,505.5 L961.5,505.0 L962.0,504.6 L962.5,504.7 L963.0,505.2 L963.5,505.8 L964.0,506.5 L964.5,507.3 L965.0,508.0 L965.5,508.7 L966.0,509.3 L966.5,509.7 L967.0,509.6 L967.5,509.2 L968.0,508.6 L968.5,508.0 L969.0,507.3 L969.5,506.7 L970.0,506.1 L970.5,505.6 L971.0,505.2 L971.5,505.5 L972.0,506.0 L972.5,506.7 L973.0,507.4 L973.5,508.1 L974.0,508.9 L974.5,509.5 L975.0,510.1 L975.5,510.6 L976.0,510.3 L976.5,509.9 L977.0,509.4 L977.5,508.8 L978.0,508.2 L978.5,507.6 L979.0,507.1 L979.5,506.7 L980.0,506.4 L980.5,506.9 L981.0,507.5 L981.5,508.2 L982.0,509.0 L982.5,509.8 L983.0,510.5 L983.5,511.2 L984.0,511.8 L984.5,512.2 L985.0,511.9 L985.5,511.5 L986.0,510.9 L986.5,510.7 L987.0,510.5 L987.5,510.4 L988.0,510.3 L988.5,510.3 L989.0,510.6 L989.5,511.5 L990.0,512.5 L990.5,513.6 L991.0,514.8 L991.5,516.0 L992.0,517.2 L992.5,518.2 L993.0,519.0 L993.5,519.5 L994.0,519.5 L994.5,519.3 L995.0,519.0 L995.5,518.7 L996.0,518.4 L996.5,518.1 L997.0,517.9 L997.5,517.8 L998.0,518.1 L998.5,518.9 L999.0,519.9 L999.5,520.9 L1000.0,522.0 L1000.5,522.9 L1001.0,523.7 L1001.5,524.5 L1002.0,525.1 L1002.5,525.3 L1003.0,525.1 L1003.5,524.7 L1004.0,524.3 L1004.5,523.8 L1005.0,523.3 L1005.5,522.8 L1006.0,522.5 L1006.5,522.2 L1007.0,522.5 L1007.5,523.2 L1008.0,523.9 L1008.5,524.8 L1009.0,525.7 L1009.5,526.6 L1010.0,527.4 L1010.5,528.0 L1011.0,528.5 L1011.5,528.4 L1012.0,528.0 L1012.5,527.4 L1013.0,526.8 L1013.5,526.2 L1014.0,525.5 L1014.5,525.0 L1015.0,524.5 L1015.5,524.1 L1016.0,524.4 L1016.5,524.9 L1017.0,525.6 L1017.5,526.3 L1018.0,527.0 L1018.5,527.8 L1019.0,528.5 L1019.5,529.0 L1020.0,529.5 L1020.5,529.0 L1021.0,528.4 L1021.5,527.6 L1022.0,526.8 L1022.5,525.9 L1023.0,525.1 L1023.5,524.3 L1024.0,523.7 L1024.5,523.2 L1025.0,523.4 L1025.5,523.7 L1026.0,524.2 L1026.5,524.7 L1027.0,525.3 L1027.5,525.8 L1028.0,526.3 L1028.5,526.6 L1029.0,526.8 L1029.5,526.2 L1030.0,525.6 L1030.5,524.8 L1031.0,524.0 L1031.5,523.2 L1032.0,522.5 L1032.5,521.8 L1033.0,521.2 L1033.5,520.9 L1034.0,521.2 L1034.5,521.6 L1035.0,522.1 L1035.5,522.7 L1036.0,523.3 L1036.5,523.9 L1037.0,524.4 L1037.5,524.7 L1038.0,524.8 L1038.5,524.3 L1039.0,523.6 L1039.5,522.9 L1040.0,522.1 L1040.5,521.3 L1041.0,520.5 L1041.5,519.9 L1042.0,519.3 L1042.5,519.1 L1043.0,519.5 L1043.5,519.9 L1044.0,520.5 L1044.5,521.1 L1045.0,521.7 L1045.5,522.1 L1046.0,522.5 L1046.5,522.7 L1047.0,522.5 L1047.5,521.8 L1048.0,521.0 L1048.5,520.2 L1049.0,519.3 L1049.5,518.3 L1050.0,517.5 L1050.5,516.7 L1051.0,516.1 L1051.5,515.9 L1052.0,516.2 L1052.5,516.6 L1053.0,517.1 L1053.5,517.6 L1054.0,518.1 L1054.5,518.6 L1055.0,518.9 L1055.5,519.2 L1056.0,518.9 L1056.5,518.2 L1057.0,517.5 L1057.5,516.6 L1058.0,515.7 L1058.5,514.9 L1059.0,514.1 L1059.5,513.4 L1060.0,512.8 L1060.5,512.8 L1061.0,513.2 L1061.5,513.6 L1062.0,514.1 L1062.5,514.6 L1063.0,515.1 L1063.5,515.6 L1064.0,515.9 L1064.5,516.1 L1065.0,515.7 L1065.5,515.1 L1066.0,514.5 L1066.5,513.8 L1067.0,513.1 L1067.5,512.4 L1068.0,511.7 L1068.5,511.2 L1069.0,510.8 L1069.5,511.1 L1070.0,511.6 L1070.5,512.2 L1071.0,512.9 L1071.5,513.5 L1072.0,514.2 L1072.5,514.8 L1073.0,515.2 L1073.5,515.5 L1074.0,515.1 L1074.5,514.5 L1075.0,513.9 L1075.5,513.2 L1076.0,512.5 L1076.5,511.8 L1077.0,511.1 L1077.5,510.6 L1078.0,510.4 L1078.5,510.8 L1079.0,511.3 L1079.5,511.9 L1080.0,512.5 L1080.5,513.2 L1081.0,513.8 L1081.5,514.4 L1082.0,514.8 L1082.5,514.9 L1083.0,514.4 L1083.5,513.8 L1084.0,513.2 L1084.5,512.4 L1085.0,511.7 L1085.5,511.0 L1086.0,510.4 L1086.5,509.9 L1087.0,509.7 L1087.5,510.1 L1088.0,510.6 L1088.5,511.2 L1089.0,511.9 L1089.5,512.6 L1090.0,513.2 L1090.5,513.7 L1091.0,514.1 L1091.5,514.1 L1092.0,513.6 L1092.5,513.0 L1093.0,512.3 L1093.5,511.5 L1094.0,510.8 L1094.5,510.1 L1095.0,509.5 L1095.5,509.0 L1096.0,509.1 L1096.5,509.5 L1097.0,510.0 L1097.5,510.6 L1098.0,511.3 L1098.5,511.9 L1099.0,512.5 L1099.5,513.0 L1100.0,513.4 L1100.5,513.2 L1101.0,512.8 L1101.5,512.2 L1102.0,511.5 L1102.5,510.8 L1103.0,510.1 L1103.5,509.5 L1104.0,508.9 L1104.5,508.5 L1105.0,508.7 L1105.5,509.2 L1106.0,509.8 L1106.5,510.5 L1107.0,511.2 L1107.5,511.8 L1108.0,512.5 L1108.5,513.0 L1109.0,513.4 L1109.5,513.0 L1110.0,512.5 L1110.5,511.9 L1111.0,511.2 L1111.5,510.5 L1112.0,509.9 L1112.5,509.2 L1113.0,508.7 L1113.5,508.3 L1114.0,508.7 L1114.5,509.2 L1115.0,509.8 L1115.5,510.5 L1116.0,511.2 L1116.5,511.9 L1117.0,512.5 L1117.5,512.9 L1118.0,513.2 L1118.5,512.8 L1119.0,512.3 L1119.5,511.7 L1120.0,511.0 L1120.5,510.3 L1121.0,509.6 L1121.5,509.0 L1122.0,508.5 L1122.5,508.3 L1123.0,508.7 L1123.5,509.2 L1124.0,509.8 L1124.5,510.5 L1125.0,511.2 L1125.5,511.9 L1126.0,512.5 L1126.5,512.9 L1127.0,513.1 L1127.5,512.6 L1128.0,512.1 L1128.5,511.4 L1129.0,510.7 L1129.5,510.0 L1130.0,509.4 L1130.5,508.8 L1131.0,508.3 L1131.5,508.2 L1132.0,508.7 L1132.5,509.2 L1133.0,509.9 L1133.5,510.5 L1134.0,511.2 L1134.5,511.9 L1135.0,512.4 L1135.5,512.9 L1136.0,512.9 L1136.5,512.4 L1137.0,511.9 L1137.5,511.2 L1138.0,510.5 L1138.5,509.8 L1139.0,509.1 L1139.5,508.6 L1140.0,508.1 L1140.5,508.2 L1141.0,508.7 L1141.5,509.3 L1142.0,510.0 L1142.5,510.7 L1143.0,511.4 L1143.5,512.1 L1144.0,512.7 L1144.5,513.1 L1145.0,513.0 L1145.5,512.6 L1146.0,512.0 L1146.5,511.4 L1147.0,510.7 L1147.5,510.0 L1148.0,509.4 L1148.5,508.9 L1149.0,508.5 L1149.5,508.8 L1150.0,509.3 L1150.5,509.9 L1151.0,510.6 L1151.5,511.3 L1152.0,512.0 L1152.5,512.7 L1153.0,513.2 L1153.5,513.6 L1154.0,513.4 L1154.5,512.9 L1155.0,512.3 L1155.5,511.7 L1156.0,511.0 L1156.5,510.3 L1157.0,509.7 L1157.5,509.3 L1158.0,508.9 L1158.5,509.3 L1159.0,509.8 L1159.5,510.5 L1160.0,511.2 L1160.5,511.9 L1161.0,512.6 L1161.5,513.2 L1162.0,513.7 L1162.5,514.0 L1163.0,513.6 L1163.5,513.1 L1164.0,512.5 L1164.5,511.8 L1165.0,511.1 L1165.5,510.4 L1166.0,509.9 L1166.5,509.4 L1167.0,509.2 L1167.5,509.6 L1168.0,510.1 L1168.5,510.7 L1169.0,511.4 L1169.5,512.1 L1170.0,512.8 L1170.5,513.4 L1171.0,513.9 L1171.5,514.0 L1172.0,513.6 L1172.5,513.1 L1173.0,512.5 L1173.5,511.8 L1174.0,511.1 L1174.5,510.4 L1175.0,509.9 L1175.5,509.4 L1176.0,509.3 L1176.5,509.8 L1177.0,510.3 L1177.5,511.0 L1178.0,511.7 L1178.5,512.4 L1179.0,513.1 L1179.5,513.6 L1180.0,514.1 L1180.5,514.1 L1181.0,513.6 L1181.5,513.1 L1182.0,512.4 L1182.5,511.7 L1183.0,511.1 L1183.5,510.4 L1184.0,509.9 L1184.5,509.4 L1185.0,509.5 L1185.5,510.0 L1186.0,510.6 L1186.5,511.2 L1187.0,511.9 L1187.5,512.6 L1188.0,513.3 L1188.5,513.8 L1189.0,514.3 L1189.5,514.1 L1190.0,513.7 L1190.5,513.1 L1191.0,512.4 L1191.5,511.7 L1192.0,511.0 L1192.5,510.4 L1193.0,509.9 L1193.5,509.5 L1194.0,509.7 L1194.5,510.2 L1195.0,510.8 L1195.5,511.5 L1196.0,512.2 L1196.5,512.9 L1197.0,513.5 L1197.5,514.0 L1198.0,514.4 L1198.5,514.1 L1199.0,513.7 L1199.5,513.1 L1200.0,512.4 L1200.5,511.7 L1201.0,511.0 L1201.5,510.4 L1202.0,509.9 L1202.5,509.6 L1203.0,510.0 L1203.5,510.5 L1204.0,511.1 L1204.5,511.8 L1205.0,512.6 L1205.5,513.2 L1206.0,513.9 L1206.5,514.4 L1207.0,514.7 L1207.5,514.3 L1208.0,513.8 L1208.5,513.2 L1209.0,512.5 L1209.5,511.9 L1210.0,511.2 L1210.5,510.6 L1211.0,510.2 L1211.5,509.9 L1212.0,510.4 L1212.5,510.9 L1213.0,511.6 L1213.5,512.3 L1214.0,513.0 L1214.5,513.7 L1215.0,514.3 L1215.5,514.8 L1216.0,514.9 L1216.5,514.5 L1217.0,514.0 L1217.5,513.4 L1218.0,512.7 L1218.5,512.0 L1219.0,511.4 L1219.5,510.8 L1220.0,510.4 L1220.5,510.3 L1221.0,510.8 L1221.5,511.3 L1222.0,512.0 L1222.5,512.7 L1223.0,513.4 L1223.5,514.1 L1224.0,514.7 L1224.5,515.1 L1225.0,515.2 L1225.5,514.7 L1226.0,514.2 L1226.5,513.5 L1227.0,512.9 L1227.5,512.2 L1228.0,511.6 L1228.5,511.0 L1229.0,510.6 L1229.5,510.7 L1230.0,511.2 L1230.5,511.8 L1231.0,512.4 L1231.5,513.2 L1232.0,513.9 L1232.5,514.5 L1233.0,515.1 L1233.5,515.5 L1234.0,515.4 L1234.5,514.9 L1235.0,514.3 L1235.5,513.7 L1236.0,513.0 L1236.5,512.3 L1237.0,511.7 L1237.5,511.2 L1238.0,510.8 L1238.5,511.0 L1239.0,511.5 L1239.5,512.2 L1240.0,512.8 L1240.5,513.6 L1241.0,514.3 L1241.5,514.9 L1242.0,515.4 L1242.5,515.8 L1243.0,515.6 L1243.5,515.1 L1244.0,514.5 L1244.5,513.8 L1245.0,513.1 L1245.5,512.5 L1246.0,511.9 L1246.5,511.4 L1247.0,511.0 L1247.5,511.4 L1248.0,511.9 L1248.5,512.6 L1249.0,513.3 L1249.5,514.0 L1250.0,514.7 L1250.5,515.3 L1251.0,515.8 L1251.5,516.1 L1252.0,515.7 L1252.5,515.2 L1253.0,514.6 L1253.5,514.0 L1254.0,513.3 L1254.5,512.6 L1255.0,512.0 L1255.5,511.6 L1256.0,511.3 L1256.5,511.8 L1257.0,512.3 L1257.5,513.0 L1258.0,513.7 L1258.5,514.4 L1259.0,515.1 L1259.5,515.7 L1260.0,516.1 L1260.5,516.3 L1261.0,515.9 L1261.5,515.4 L1262.0,514.8 L1262.5,514.1 L1263.0,513.4 L1263.5,512.7 L1264.0,512.2 L1264.5,511.7 L1265.0,511.7 L1265.5,512.1 L1266.0,512.7 L1266.5,513.4 L1267.0,514.1 L1267.5,514.8 L1268.0,515.5 L1268.5,516.0 L1269.0,516.5 L1269.5,516.5 L1270.0,516.1 L1270.5,515.5 L1271.0,514.9 L1271.5,514.2 L1272.0,513.5 L1272.5,512.9 L1273.0,512.4 L1273.5,511.9 L1274.0,512.0 L1274.5,512.5 L1275.0,513.1 L1275.5,513.8 L1276.0,514.5 L1276.5,515.2 L1277.0,515.8 L1277.5,516.4 L1278.0,516.8 L1278.5,516.7 L1279.0,516.2 L1279.5,515.7 L1280.0,515.0 L1280.5,514.3 L1281.0,513.7 L1281.5,513.1 L1282.0,512.5 L1282.5,512.1 L1283.0,512.4 L1283.5,512.9 L1284.0,513.5 L1284.5,514.2 L1285.0,514.9 L1285.5,515.6 L1286.0,516.3 L1286.5,516.8 L1287.0,517.2 L1287.5,516.9 L1288.0,516.4 L1288.5,515.8 L1289.0,515.2 L1289.5,514.5 L1290.0,513.8 L1290.5,513.2 L1291.0,512.7 L1291.5,512.4 L1292.0,512.8 L1292.5,513.3 L1293.0,513.9 L1293.5,514.6 L1294.0,515.4 L1294.5,516.0 L1295.0,516.7 L1295.5,517.2 L1296.0,517.5 L1296.5,517.1 L1297.0,516.6 L1297.5,516.0 L1298.0,515.3 L1298.5,514.7 L1299.0,514.0 L1299.5,513.4 L1300.0,513.0 L1300.5,512.7 L1301.0,513.2 L1301.5,513.7 L1302.0,514.4 L1302.5,515.1 L1303.0,515.8 L1303.5,516.5 L1304.0,517.1 L1304.5,517.6 L1305.0,517.7 L1305.5,517.3 L1306.0,516.8 L1306.5,516.2 L1307.0,515.5 L1307.5,514.8 L1308.0,514.2 L1308.5,513.6 L1309.0,513.2 L1309.5,513.1 L1310.0,513.6 L1310.5,514.1 L1311.0,514.7 L1311.5,515.4 L1312.0,516.1 L1312.5,516.7 L1313.0,517.3 L1313.5,517.7 L1314.0,517.7 L1314.5,517.2 L1315.0,516.7 L1315.5,516.0 L1316.0,515.3 L1316.5,514.6 L1317.0,513.9 L1317.5,513.3 L1318.0,512.9 L1318.5,513.0 L1319.0,513.4 L1319.5,514.0 L1320.0,514.6 L1320.5,515.3 L1321.0,516.0 L1321.5,516.6 L1322.0,517.1 L1322.5,517.5 L1323.0,517.4 L1323.5,516.9 L1324.0,516.3 L1324.5,515.6 L1325.0,514.9 L1325.5,514.2 L1326.0,513.5 L1326.5,513.0 L1327.0,512.6 L1327.5,512.8 L1328.0,513.2 L1328.5,513.8 L1329.0,514.5 L1329.5,515.2 L1330.0,515.8 L1330.5,516.4 L1331.0,516.9 L1331.5,517.3 L1332.0,517.0 L1332.5,516.5 L1333.0,515.9 L1333.5,515.2 L1334.0,514.5 L1334.5,513.8 L1335.0,513.1 L1335.5,512.6 L1336.0,512.2 L1336.5,512.6 L1337.0,513.1 L1337.5,513.7 L1338.0,514.3 L1338.5,515.0 L1339.0,515.7 L1339.5,516.3 L1340.0,516.8 L1340.5,517.1 L1341.0,516.7 L1341.5,516.2 L1342.0,515.6 L1342.5,514.9 L1343.0,514.2 L1343.5,513.5 L1344.0,513.0 L1344.5,512.5 L1345.0,512.3 L1345.5,512.7 L1346.0,513.2 L1346.5,513.9 L1347.0,514.6 L1347.5,515.3 L1348.0,515.9 L1348.5,516.5 L1349.0,517.0 L1349.5,517.2 L1350.0,516.8 L1350.5,516.2 L1351.0,515.6 L1351.5,514.9 L1352.0,514.2 L1352.5,513.6 L1353.0,513.0 L1353.5,512.6 L1354.0,512.5 L1354.5,512.9 L1355.0,513.5 L1355.5,514.2 L1356.0,514.9 L1356.5,515.6 L1357.0,516.2 L1357.5,516.8 L1358.0,517.3 L1358.5,517.3 L1359.0,516.8 L1359.5,516.3 L1360.0,515.6 L1360.5,515.0 L1361.0,514.3" fill="none" stroke="#3B4FA3" stroke-width="1.15" stroke-linejoin="round"/></svg>
<div class="a" style="left:303px;top:355px;width:1px;height:343px;background:#3B4FA3;"></div>
<div class="a" style="left:813px;top:355px;width:2px;height:342px;background:#000;"></div>
<div class="a" style="left:989px;top:355px;width:1px;height:343px;background:#7CC05A;"></div>
<div class="a" style="left:305px;top:363px;width:71px;height:25px;background:#7479BA;"></div>
<div class="t" style="left:306px;top:375px;font-size:11px;color:#2E3E98;letter-spacing:0.9px;">77.8 m/µs</div>
<div class="a" style="left:815px;top:356px;width:160px;height:49px;background:#C4C4C4;"></div>
<div class="t" style="left:817px;top:358px;font-size:21px;color:#55B52A;letter-spacing:1px;transform-origin:0 0;transform:scaleX(1.35);-webkit-text-stroke:0.3px #55B52A;">190.2 m</div>
<div class="t" style="left:817px;top:383px;font-size:21px;color:#55B52A;letter-spacing:1px;transform-origin:0 0;transform:scaleX(1.37);-webkit-text-stroke:0.3px #55B52A;">77.6 m/µs</div>
<div class="a" style="left:990px;top:356px;width:71px;height:24px;background:#8CC26A;"></div>
<div class="t" style="left:991.5px;top:356.5px;font-size:10px;color:#2E4A9E;letter-spacing:0.5px;transform-origin:0 0;transform:scaleX(1.15);">746.0 m</div>
<div class="t" style="left:991.5px;top:369px;font-size:10px;color:#2E4A9E;letter-spacing:0.5px;transform-origin:0 0;transform:scaleX(1.15);">77.6 m/µs</div>
<div class="a" style="left:248px;top:720px;width:1124px;height:1px;background:#F6F4EC;"></div>
<div class="t" style="left:243px;top:735px;font-size:11.5px;color:#111;letter-spacing:0.2px;">Descarga [pC]:</div>
<div class="a" style="left:244px;top:749px;width:134px;height:24px;box-sizing:border-box;border-top:2px solid #7F7C6E;border-left:2px solid #7F7C6E;border-right:1px solid #fff;border-bottom:1px solid #fff;"></div>
<div class="t" style="left:244px;width:127px;text-align:right;top:755px;font-size:11.5px;color:#111;">257.9</div>
<div class="btn" style="left:410px;top:749px;width:165px;height:25px;"><span style="top:6px;font-size:11.5px;">Mudar display</span></div>
<div class="btn" style="left:578px;top:749px;width:165px;height:25px;"><span style="top:6px;font-size:11.5px;">Carregar medição</span></div>
<div class="btn" style="left:746px;top:749px;width:164px;height:25px;"><span style="top:6px;font-size:11.5px;">Snapshot LOC</span></div>
<div class="a" style="left:936px;top:732px;width:103px;height:40px;background:#F2E21A;"></div>
<div class="btn" style="left:941px;top:737px;width:94px;height:31px;"><span style="top:9px;font-size:11.5px;">Próximo</span></div>
<div class="a" style="left:1048px;top:732px;width:103px;height:41px;background:#000;"></div>
<div class="btn" style="left:1053px;top:737px;width:93px;height:31px;"><span style="top:9px;font-size:11.5px;">Distante</span></div>
<div class="a" style="left:1188px;top:733px;width:189px;height:40px;background:#2E4A9E;"></div>
<div class="btn" style="left:1193px;top:738px;width:179px;height:30px;"><span style="top:8px;font-size:11.5px;">Avaliação autom.</span></div>
</body></html>
